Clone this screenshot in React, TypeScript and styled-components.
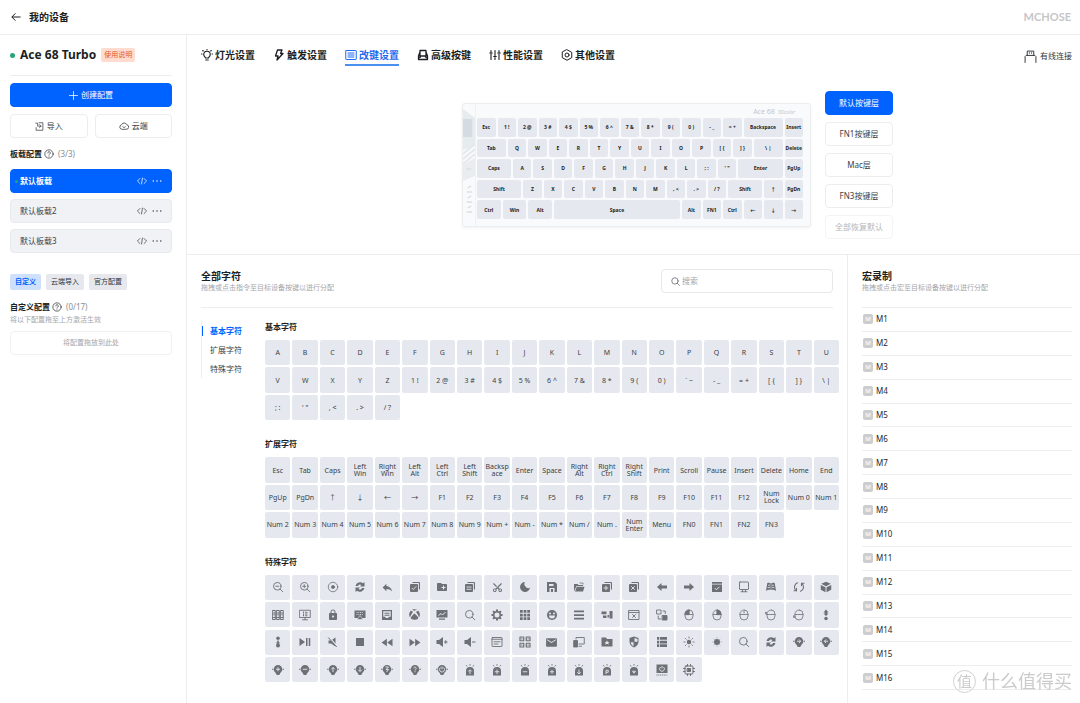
import React from "react";
import styled, { createGlobalStyle, css } from "styled-components";
import {
  MdReply,
  MdCreateNewFolder,
  MdContentCut,
  MdLock,
  MdFastRewind,
  MdFastForward,
  MdStop,
  MdMail,
} from "react-icons/md";
import { FaXbox } from "react-icons/fa";

const BLUE = "#0062ff";
const KEY = "#e5e9ef";
const LINE = "#ededee";

const GlobalStyle = createGlobalStyle`
  *, *::before, *::after { box-sizing: border-box; }
  body {
    margin: 0;
    background: #fff;
    color: #1c1e22;
    font-family: "Noto Sans", "Noto Sans CJK SC", sans-serif;
    font-size: 8px;
    line-height: 12px;
  }
  button, input { font: inherit; color: inherit; margin: 0; }
  button { cursor: pointer; }
  h1, h2, h3, p, ul { margin: 0; padding: 0; }
  ul { list-style: none; }
  a { color: inherit; text-decoration: none; }
  svg { display: block; flex: none; }
`;

/* ---------- shell ---------- */

const Page = styled.div`
  display: flex;
  flex-direction: column;
  min-height: 100vh;
`;

const TopBar = styled.header`
  display: flex;
  align-items: center;
  justify-content: space-between;
  height: 35px;
  padding: 0 9px 0 11px;
  border-bottom: 1px solid ${LINE};
`;

const BackLink = styled.a`
  display: flex;
  align-items: center;
  gap: 8px;
  font-size: 10px;
  font-weight: 700;
`;

const Brand = styled.span`
  font-family: Lato, sans-serif;
  font-size: 11px;
  font-weight: 700;
  color: #c6c6c8;
`;

const Body = styled.div`
  display: flex;
  flex: 1;
`;

const Sidebar = styled.aside`
  width: 187px;
  flex: none;
  padding: 0 14px 0 10px;
  border-right: 1px solid ${LINE};
`;

const Main = styled.main`
  display: flex;
  flex: 1;
  flex-direction: column;
  min-width: 0;
`;

/* ---------- sidebar ---------- */

const DeviceRow = styled.div`
  display: flex;
  align-items: center;
  height: 41px;
  border-bottom: 1px solid ${LINE};
`;

const Dot = styled.span<{ $size: number }>`
  display: block;
  width: ${(p) => p.$size}px;
  height: ${(p) => p.$size}px;
  border-radius: 50%;
  background: #27a376;
`;

const DeviceName = styled.h1`
  margin: 0 5px;
  font-size: 12px;
  line-height: 18px;
  font-weight: 700;
  white-space: nowrap;
`;

const GuideLink = styled.a`
  padding: 1px 3px;
  border-radius: 2px;
  background: #ffdccf;
  color: #e4582b;
  font-size: 7px;
`;

const Button = styled.button<{ $kind?: "primary" | "muted" }>`
  display: flex;
  flex: 1;
  align-items: center;
  justify-content: center;
  gap: 3px;
  width: 100%;
  height: 24px;
  padding: 0;
  border: 1px solid ${LINE};
  border-radius: 4px;
  background: #fff;
  color: #3b3e44;
  ${(p) =>
    p.$kind === "primary" &&
    css`
      background: ${BLUE};
      border-color: ${BLUE};
      color: #fff;
    `}
  ${(p) =>
    p.$kind === "muted" &&
    css`
      border-color: #f4f4f5;
      color: #b4b6ba;
    `}
`;

const Actions = styled.div`
  display: flex;
  flex-wrap: wrap;
  gap: 7px;
  margin-top: 7px;
`;

const FullRow = styled.div`
  display: flex;
  width: 100%;
`;

const GroupTitle = styled.h2<{ $tall?: boolean }>`
  display: flex;
  align-items: center;
  gap: 2px;
  height: ${(p) => (p.$tall ? 31 : 14)}px;
  font-size: 8px;
  font-weight: 700;
`;

const Count = styled.span`
  margin-left: 2px;
  font-weight: 400;
  color: #8b8e94;
`;

const ProfileList = styled.ul`
  display: flex;
  flex-direction: column;
  gap: 6px;
`;

const Profile = styled.li<{ $active?: boolean }>`
  display: flex;
  align-items: center;
  height: 24px;
  padding: 0 9px 0 4px;
  border: 1px solid ${(p) => (p.$active ? BLUE : "#e9eaee")};
  border-radius: 4px;
  background: ${(p) => (p.$active ? BLUE : "#f1f2f6")};
  color: ${(p) => (p.$active ? "#fff" : "#3b3e44")};
  font-weight: ${(p) => (p.$active ? 700 : 400)};
`;

const ProfileMark = styled.span`
  width: 5px;
`;

const ProfileName = styled.span`
  flex: 1;
`;

const IconButton = styled.button`
  display: flex;
  padding: 0;
  margin-left: 5px;
  border: 0;
  background: none;
`;

const Chips = styled.div`
  display: flex;
  gap: 5px;
  margin: 21px 0 10px;
`;

const Chip = styled.button<{ $active?: boolean }>`
  height: 16px;
  padding: 0 5px;
  border: 0;
  border-radius: 2px;
  font-size: 7px;
  line-height: 16px;
  font-weight: ${(p) => (p.$active ? 700 : 400)};
  background: ${(p) => (p.$active ? "#cfe0fd" : "#e6e8ed")};
  color: ${(p) => (p.$active ? BLUE : "#33363b")};
`;

const Hint = styled.p`
  font-size: 7px;
  line-height: 12px;
  color: #a4a6ab;
`;

const DropZone = styled.div`
  display: flex;
  align-items: center;
  justify-content: center;
  height: 24px;
  margin-top: 5px;
  border: 1px solid #f1f1f2;
  border-radius: 4px;
  color: #a4a6ab;
  font-size: 7px;
`;

/* ---------- upper area ---------- */

const Stage = styled.section`
  padding: 11px 8px 15px 14px;
  border-bottom: 1px solid ${LINE};
`;

const TabRow = styled.div`
  display: flex;
  align-items: center;
  justify-content: space-between;
`;

const Tabs = styled.nav`
  display: flex;
  gap: 18px;
`;

const Tab = styled.a<{ $active?: boolean }>`
  display: flex;
  align-items: center;
  gap: 2px;
  height: 20px;
  border-bottom: 2px solid ${(p) => (p.$active ? "#4a90f0" : "transparent")};
  color: ${(p) => (p.$active ? "#1f6bf0" : "#1c1e22")};
  font-size: 10px;
  font-weight: 700;
  white-space: nowrap;
`;

const Connection = styled.span`
  display: flex;
  align-items: center;
  gap: 3px;
  font-size: 8px;
  color: #33363b;
`;

const Workbench = styled.div`
  display: grid;
  grid-template-columns: 1fr auto 1fr;
  align-items: center;
  gap: 14px;
  margin-top: 25px;
`;

const Keyboard = styled.div`
  grid-column: 2;
  display: grid;
  grid-template-columns: 13px 328px 6px;
  grid-template-rows: 13px 103px 6px;
  border: 1px solid #eceef0;
  border-radius: 3px;
  background: #f9fafb;
  box-shadow: 0 1px 3px #0000000f;
`;

const KeyboardSide = styled.div`
  grid-row: 1 / -1;
  border-right: 1px solid #eff1f3;
`;

const KeyboardLogo = styled.div`
  grid-column: 2;
  padding: 1px 9px 0 0;
  text-align: right;
  font-size: 7px;
  line-height: 13px;
  color: #c3c7cc;
`;

const Edition = styled.em`
  margin-left: 3px;
  font-size: 5px;
`;

const KeyMatrix = styled.div`
  grid-column: 2;
  display: grid;
  grid-template-columns: repeat(64, minmax(0, 1fr));
  grid-template-rows: repeat(5, minmax(0, 1fr));
`;

const BoardKey = styled.button<{ $span: number }>`
  grid-column: span ${(p) => p.$span};
  margin: 1px;
  padding: 0;
  border: 0;
  border-radius: 2px;
  background: ${KEY};
  font-size: 5px;
  line-height: 6px;
  font-weight: 700;
  white-space: pre;
`;

const Layers = styled.div`
  display: flex;
  flex-direction: column;
  gap: 7px;
  width: 68px;
`;

/* ---------- lower area ---------- */

const Lower = styled.div`
  display: flex;
  flex: 1;
`;

const Library = styled.section`
  flex: 1;
  min-width: 0;
  padding-left: 14px;
`;

const Macros = styled.section`
  width: 233px;
  flex: none;
  padding: 0 8px 0 14px;
  border-left: 1px solid ${LINE};
`;

const PanelHead = styled.div<{ $inset?: boolean }>`
  display: flex;
  align-items: center;
  justify-content: space-between;
  margin-right: ${(p) => (p.$inset ? 14 : 0)}px;
  padding: 14px 0;
  border-bottom: 1px solid ${LINE};
`;

const PanelTitle = styled.h2`
  font-size: 10px;
  line-height: 14px;
  font-weight: 700;
`;

const PanelHint = styled.p`
  font-size: 7px;
  line-height: 10px;
  color: #a4a6ab;
`;

const Search = styled.label`
  display: flex;
  align-items: center;
  gap: 2px;
  width: 172px;
  height: 24px;
  padding: 0 9px;
  border: 1px solid #e8e8ea;
  border-radius: 4px;
  color: #5c6066;
`;

const SearchInput = styled.input`
  flex: 1;
  min-width: 0;
  padding: 0;
  border: 0;
  outline: 0;
  background: none;
  &::placeholder { color: #a4a6ab; opacity: 1; }
`;

const LibraryBody = styled.div`
  display: flex;
  padding: 13px 8px 19px 0;
`;

const Anchors = styled.nav`
  display: flex;
  flex: none;
  flex-direction: column;
  align-self: flex-start;
  width: 64px;
`;

const Anchor = styled.a<{ $active?: boolean }>`
  display: flex;
  align-items: center;
  height: 19px;
  border-left: 1px solid ${LINE};
  color: ${(p) => (p.$active ? BLUE : "#3b3e44")};
  font-weight: ${(p) => (p.$active ? 700 : 400)};
  &::before {
    content: "";
    width: 1px;
    height: 10px;
    margin-right: 7px;
    background: ${(p) => (p.$active ? BLUE : "transparent")};
  }
`;

const Groups = styled.div`
  display: flex;
  flex: 1;
  flex-direction: column;
  gap: 18px;
  min-width: 0;
`;

const KeyGroupTitle = styled.h3`
  margin-bottom: 7px;
  font-size: 8px;
  line-height: 12px;
  font-weight: 700;
`;

const KeyGrid = styled.div`
  display: grid;
  grid-template-columns: repeat(21, minmax(0, 1fr));
  gap: 2px;
`;

const KeyCap = styled.button`
  display: flex;
  align-items: center;
  justify-content: center;
  aspect-ratio: 1;
  min-width: 0;
  padding: 0;
  border: 0;
  border-radius: 2px;
  background: ${KEY};
  color: #3b3e44;
  font-size: 7px;
  line-height: 7px;
`;

const KeyText = styled.span`
  width: 100%;
  text-align: center;
  white-space: pre-line;
  overflow-wrap: anywhere;
`;

const Glyph = styled.span`
  color: #6d7074;
`;

const MacroList = styled.ul`
  display: grid;
  grid-template-rows: repeat(16, minmax(0, 1fr));
  height: 382px;
`;

const Macro = styled.li`
  display: flex;
  align-items: center;
  gap: 3px;
  padding-left: 1px;
  border-bottom: 1px solid ${LINE};
  color: #26282c;
`;

const MacroBadge = styled.span`
  width: 10px;
  height: 10px;
  border-radius: 2px;
  background: #cdcdcf;
  color: #f4f4f5;
  font-size: 6px;
  line-height: 10px;
  font-weight: 700;
  text-align: center;
`;

const Watermark = styled.div`
  position: fixed;
  right: 8px;
  bottom: 10px;
  display: flex;
  align-items: center;
  gap: 6px;
  color: #cbcbcd;
  font-size: 18px;
  line-height: 24px;
  pointer-events: none;
`;

const WatermarkSeal = styled.span`
  width: 23px;
  height: 23px;
  border: 1px solid #d0d0d2;
  border-radius: 50%;
  font-size: 15px;
  line-height: 20px;
  text-align: center;
`;

/* ---------- icons ---------- */

type DrawProps = { size?: number; children: React.ReactNode };

const Outline = ({ size = 12, w = 2, children }: DrawProps & { w?: number }) => (
  <svg width={size} height={size} viewBox="0 0 24 24" fill="none" stroke="currentColor" strokeWidth={w} strokeLinecap="round" strokeLinejoin="round" aria-hidden>
    {children}
  </svg>
);

const Solid = ({ size = 12, children }: DrawProps) => (
  <svg width={size} height={size} viewBox="0 0 24 24" fill="currentColor" aria-hidden>
    {children}
  </svg>
);

const HelpIcon = () => (
  <Outline size={10} w={1.6}>
    <circle cx="12" cy="12" r="10" />
    <path d="M9 9.500a3 3 0 1 1 4.400 2.600c-.9.5-1.400 1-1.400 2M12 17.200v.3" />
  </Outline>
);

const CodeIcon = () => (
  <Outline size={10} w={1.8}>
    <path d="M7 6 1 12l6 6M17 6l6 6-6 6M13 5l-2 14" />
  </Outline>
);

const MoreIcon = () => (
  <Solid size={10}>
    <circle cx="3" cy="12" r="1.800" />
    <circle cx="12" cy="12" r="1.800" />
    <circle cx="21" cy="12" r="1.800" />
  </Solid>
);

const Lens = ({ mark }: { mark?: string }) => (
  <Outline w={1.8}>
    <circle cx="10.500" cy="10.500" r="7.500" />
    <path d="m16 16 5.500 5.500" />
    {mark && <path d={mark} />}
  </Outline>
);

/* Two stacked sheets with a mark cut out of the front one. */
const Stack = ({ mark }: { mark: string }) => (
  <Solid>
    <path d="M7 2h13a2 2 0 0 1 2 2v13h-2.200V4.200H7z" />
    <rect x="2" y="6" width="16" height="16" rx="2" />
    <path d={mark} fill="none" stroke={KEY} strokeWidth="1.800" />
  </Solid>
);

/* Two chunky arrows chasing each other. */
const Swirl = () => (
  <Solid>
    <path d="M3 10a9.500 9.500 0 0 1 15-5.500L21 2v9h-9l3-3C12 6 9 7 8 10z" />
    <path d="M3 10a9.500 9.500 0 0 1 15-5.500L21 2v9h-9l3-3C12 6 9 7 8 10z" transform="rotate(180 12 12)" />
  </Solid>
);

const MouseBody = ({ children }: { children: React.ReactNode }) => (
  <Outline w={1.6}>
    <rect x="4" y="2" width="16" height="20" rx="8" />
    {children}
  </Outline>
);

/* Light bulb with side rays and a mark inside. */
const Bulb = ({ mark }: { mark: string }) => (
  <Solid>
    <path d="M12 2a8.500 8.500 0 0 1 8.500 8.500c0 3-1.600 5.500-3.500 7L14.500 22h-5L7 17.500c-1.900-1.500-3.500-4-3.500-7A8.500 8.500 0 0 1 12 2z" />
    <path d="M0 10.500h3M21 10.500h3" stroke="currentColor" strokeWidth="2" />
    <path d={mark} fill="none" stroke={KEY} strokeWidth="1.800" />
  </Solid>
);

/* Backlight dome with rays above and a mark inside. */
const Dome = ({ mark }: { mark: string }) => (
  <Solid>
    <path d="M4 23v-9a8 8 0 0 1 16 0v9z" />
    <path d="M12 0v3.500M4 2l2.500 3M20 2l-2.500 3" stroke="currentColor" strokeWidth="1.600" />
    <path d={mark} fill="none" stroke={KEY} strokeWidth="1.800" />
  </Solid>
);

const OCTANTS = [0, 45, 90, 135, 180, 225, 270, 315];

const Rays = ({ from, to, w }: { from: number; to: number; w: number }) => (
  <g stroke="currentColor" strokeWidth={w}>
    {OCTANTS.map((a) => (
      <path key={a} d={`M12 ${12 - from}V${12 - to}`} transform={`rotate(${a} 12 12)`} />
    ))}
  </g>
);

const ArrowSolid = ({ flip }: { flip?: boolean }) => (
  <Solid>
    <path d="M11 4v5h11v6H11v5l-9-8z" transform={flip ? "rotate(180 12 12)" : undefined} />
  </Solid>
);

const SPECIAL: React.ReactNode[] = [
  <Lens mark="M7.500 10.500h6" />,
  <Lens mark="M7.500 10.500h6M10.500 7.500v6" />,
  <Outline w={1.6}><circle cx="12" cy="12" r="9.500" /><circle cx="12" cy="12" r="3" fill="currentColor" /></Outline>,
  <Swirl />,
  <MdReply size={13} />,
  <Stack mark="m5.500 14 3 3 6-6.500" />,
  <MdCreateNewFolder size={12} />,
  <Stack mark="M5 12h10M5 16.500h10" />,
  <MdContentCut size={11} style={{ transform: "rotate(-90deg)" }} />,
  <Solid><path d="M12 2a10 10 0 1 0 10 11 6 6 0 0 1-9-2 7 7 0 0 1-1-9z" /></Solid>,
  <Solid><path fillRule="evenodd" d="M2 2h16l4 4v16h-5v-8H7v8H2zM6 6v4h9V6zM10 16h4v6h-4z" /></Solid>,
  <Solid><path d="M2 21V6h7l2 2h9v2H7z" /><path d="M7.500 11.500H23L20 21H4z" /><path d="M13 4h7v3" fill="none" stroke="currentColor" strokeWidth="1.500" /></Solid>,
  <Stack mark="M10 9.500v9M5.500 14h9" />,
  <Stack mark="m6.500 10.500 7 7M13.500 10.500l-7 7" />,
  <ArrowSolid />,
  <ArrowSolid flip />,
  <Solid><path d="M2 2h20v3.500H2zM2 7h20v15H2z" /><path d="m7.500 14 3.500 3.500 6-6" fill="none" stroke={KEY} strokeWidth="2" /></Solid>,
  <Outline w={1.8}><rect x="3" y="2" width="18" height="15" rx="1" /><path d="M9 17v4M15 17v4M6 21.500h12" /></Outline>,
  <Solid><path d="M2 20 4.500 4c3-1 5-1 7 .5V18c-3-1-6-1-9.500 2zM22 20 19.500 4c-3-1-5-1-7 .5V18c3-1 6-1 9.500 2z" /><path d="M6 8.500h4M14 8.500h4M5.500 13H10M14 13h4.500" stroke={KEY} strokeWidth="1.500" /></Solid>,
  <Outline w={2.2}><path d="M9 3.500a9 9 0 0 0-2.500 15.700M15 20.500a9 9 0 0 0 2.500-15.700" /><path d="M7 14.500v5H2M17 9.500v-5h5" /></Outline>,
  <Solid><path d="m12 1.500 9.500 4-9.500 5-9.500-5zM1.500 8 11 12.700V22.500l-9.500-5zM22.500 8 13 12.700V22.500l9.500-5z" /></Solid>,

  <Outline w={2}><rect x="1.500" y="3" width="5" height="18" /><rect x="9.500" y="3" width="5" height="18" /><rect x="17.500" y="3" width="5" height="18" /><path d="M4 7v5M12 7v5M20 7v5M2 17h4M10 17h4M18 17h4" /></Outline>,
  <Outline w={1.8}><rect x="1.500" y="2.500" width="21" height="14.500" /><path d="M7 21.500h10M12 17v4" /><path d="M9 6v2M9 11v2.500M13 6.500h3M13 10h3M13 13.500h3" strokeWidth="2.200" /></Outline>,
  <MdLock size={12} />,
  <Solid><path d="M1 3h22v15H1z" /><path d="M5 7h14M5 11h14" stroke={KEY} strokeWidth="1.600" strokeDasharray="2 1.500" /><path d="m12 13 6 8H6z" stroke={KEY} strokeWidth="1.200" /></Solid>,
  <Solid><path fillRule="evenodd" d="M2 2h20v20H2zM4.500 4.500v11H8l2 2.500h4l2-2.500h3.500v-11zM7 7.500h10v2H7zM7 11.500h10v2H7z" /></Solid>,
  <FaXbox size={11} />,
  <Solid><path d="M1 2h22v15H1zM6 19h12v2.500H6z" /><path d="m5 13 5-4 3 3 6-6" fill="none" stroke={KEY} strokeWidth="2" /></Solid>,
  <Lens />,
  <Solid><circle cx="12" cy="12" r="6.500" fill="none" stroke="currentColor" strokeWidth="3" /><Rays from={7} to={11} w={4} /></Solid>,
  <Solid><path d="M2 2h5.500v5.500H2zM9.300 2h5.500v5.500H9.300zM16.500 2H22v5.500h-5.500zM2 9.300h5.500v5.500H2zM9.300 9.300h5.500v5.500H9.300zM16.500 9.300H22v5.500h-5.500zM2 16.500h5.500V22H2zM9.300 16.500h5.500V22H9.300zM16.500 16.500H22V22h-5.500z" /></Solid>,
  <Solid><circle cx="12" cy="12" r="10" /><g fill={KEY}><circle cx="8" cy="9" r="2" /><circle cx="16" cy="9" r="2" /><path d="M6 13h12a6 6 0 0 1-12 0z" /></g></Solid>,
  <Solid><path d="M2 3h20v3.500H2zM2 10.300h20v3.500H2zM2 17.500h20V21H2z" /></Solid>,
  <Solid><path d="M1 5h10v5.500H1zM4 13h7v5H4zM13 12h3v5h-3zM17 4h6v15h-6z" /></Solid>,
  <Outline w={1.8}><path d="M2 3h20v18H2zM2 7h20M9 11l6 6M15 11l-6 6" /></Outline>,
  <Outline w={1.8}><rect x="2" y="2" width="8" height="8" /><rect x="13" y="13" width="9" height="9" fill="currentColor" /><path d="M14 4h4.500v5M9.500 20H4.500v-6" /></Outline>,
  <MouseBody><path d="M4 11h16M12 2v9" /><path d="M4 10.500A8 8 0 0 1 12 2v8.500z" fill="currentColor" /></MouseBody>,
  <MouseBody><path d="M4 11h16M12 2v9" /><path d="M20 10.500A8 8 0 0 0 12 2v8.500z" fill="currentColor" /></MouseBody>,
  <MouseBody><path d="M4 11h16M12 5v3" /></MouseBody>,
  <MouseBody><path d="M4 11h16" /><path d="M2 7v2.500" strokeWidth="3" /></MouseBody>,
  <MouseBody><path d="M4 11h16" /><path d="M2 14v2.500" strokeWidth="3" /></MouseBody>,
  <Solid><path d="m12 1 5 6h-3v2h3l-5 5-5-5h3V7H7z" /><circle cx="12" cy="19" r="3.500" /></Solid>,

  <Solid><circle cx="12" cy="4.500" r="3.500" /><path d="M10.500 9h3v4h3.500l-5 4-5-4h3.500z" /><circle cx="12" cy="19" r="4" /></Solid>,
  <Solid><path d="m1 4 11 8-11 8zM14 4h3v16h-3zM19.500 4h3v16h-3z" /></Solid>,
  <Solid><path d="M3 9h5l9-6v18l-9-6H3z" /><path d="m4 2 17 20" stroke={KEY} strokeWidth="3" /><path d="m2.500 3 17 19" stroke="currentColor" strokeWidth="2" /></Solid>,
  <MdStop size={16} />,
  <MdFastRewind size={15} />,
  <MdFastForward size={15} />,
  <Solid><path d="M1 8h5l8-6v20l-8-6H1z" /><path d="M19.500 8.500v7M16 12h7" stroke="currentColor" strokeWidth="2" /></Solid>,
  <Solid><path d="M1 8h5l8-6v20l-8-6H1z" /><path d="M16 12h7" stroke="currentColor" strokeWidth="2" /></Solid>,
  <Outline w={1.8}><rect x="2" y="3" width="20" height="18" rx="1" /><path d="M2 6.500h20M6 11.500h12M6 16h8" /></Outline>,
  <Outline w={2.4}><rect x="2" y="2" width="7.500" height="7.500" /><rect x="14.500" y="2" width="7.500" height="7.500" /><rect x="2" y="14.500" width="7.500" height="7.500" /><rect x="14.500" y="14.500" width="7.500" height="7.500" /><path d="M5.500 5.700h.5M18 5.700h.5M5.500 18.200h.5M18 18.200h.5" /></Outline>,
  <MdMail size={13} />,
  <Outline w={1.8}><path d="M6 6V3h16.500v13H12M12 20.500h5" /><rect x="2" y="9" width="7" height="13" fill="currentColor" /></Outline>,
  <Solid><path d="M1 3h9l2 3h11v15H1z" /><path d="m12 8.500 1.500 3.500H17l-2.500 2 1 3.500-3.500-2-3.500 2 1-3.500-2.500-2h3.500z" fill={KEY} /></Solid>,
  <Solid><path d="M12 1 3 4v7c0 6 4 10 9 12 5-2 9-6 9-12V4z" /><path d="M13 4v7.500h6c.2-1 .2-4 0-5.500zM11 12.500H5.300c.8 4 3 6.500 5.700 8z" fill={KEY} /></Solid>,
  <Solid><path d="M2 2h20v5.500H2zM2 9.300h20v5.500H2zM2 16.500h20V22H2z" /><path d="M7 2v20" stroke={KEY} strokeWidth="1.500" /></Solid>,
  <Solid><circle cx="12" cy="12" r="4.500" /><Rays from={7} to={11} w={1.6} /></Solid>,
  <Solid><circle cx="12" cy="12" r="6" /><Rays from={7.5} to={9} w={1.6} /></Solid>,
  <Lens />,
  <Swirl />,
  <Bulb mark="M8 10.500h7M12 7l3.500 3.500L12 14" />,
  <Bulb mark="M16 10.500H9M12 7l-3.500 3.500L12 14" />,

  <Bulb mark="M8 10.500h8M12 6.500v8" />,
  <Bulb mark="M7.500 10.500h9" />,
  <Bulb mark="M12 16V7M8.500 10.500 12 7l3.500 3.500" />,
  <Bulb mark="M12 6v9M8.500 11.500 12 15l3.500-3.500" />,
  <Bulb mark="M9 6h6l-5 5h5l-4 5" />,
  <Bulb mark="M9 8.500C10 5.500 15 6 14.500 9c-.5 1.500-2.500 1.500-2.500 4M12 14.500v2" />,
  <Bulb mark="M9 7a5 5 0 1 0 6 0M12 5v5.500" />,
  <Dome mark="M12 20v-8M8.500 15 12 11.500l3.500 3.500" />,
  <Dome mark="M7.500 15.500h9M12 11v9" />,
  <Dome mark="M7.500 15.500h9" />,
  <Dome mark="M8 15.500h8M12 11.500V19.500" />,
  <Dome mark="M12 11v9M8.500 16.500 12 20l3.500-3.500" />,
  <Dome mark="M10 20v-7.500h4.500v4H10" />,
  <Dome mark="M9 14.500h6l-3 4z" />,
  <Solid><path d="M1 1h22v17H1z" /><path d="M9 6a4.800 4.800 0 1 0 6 0M12 4v5" fill="none" stroke={KEY} strokeWidth="1.800" /><path d="M1 22h22" stroke="currentColor" strokeWidth="2" strokeDasharray="2 1.600" /></Solid>,
  <Outline w={2}><rect x="4" y="4" width="16" height="16" rx="2" /><rect x="9" y="9" width="6" height="6" fill="currentColor" /><path d="M9 1v3M15 1v3M9 20v3M15 20v3M1 9h3M1 15h3M20 9h3M20 15h3" /></Outline>,
];

/* ---------- data ---------- */

const TABS: { label: string; icon: React.ReactNode }[] = [
  {
    label: "灯光设置",
    icon: <Outline w={2.2}><path d="M9 18c0-2-3.500-3-3.500-7a6.500 6.500 0 0 1 13 0c0 4-3.500 5-3.500 7zM9.500 22h5M12 1v.5M1 10h1M22 10h1M3.500 3l1 1M20.500 3l-1 1" /></Outline>,
  },
  {
    label: "触发设置",
    icon: <Outline w={2.6}><path d="M9 2h9l-3 7h5L8 22l2-8H5z" /></Outline>,
  },
  {
    label: "改键设置",
    icon: <Outline><rect x="1.500" y="3" width="21" height="18" rx="1" /><path d="M6 8h12M6 12h12M6 16h12" /></Outline>,
  },
  {
    label: "高级按键",
    icon: <Outline w={2.6}><path d="M6 3h12v11H6zM6 6 3 14v7h18v-7l-3-8M3 17h3l2-3M21 17h-3l-2-3" /></Outline>,
  },
  {
    label: "性能设置",
    icon: <Outline w={2.2}><path d="M4 3v3M4 10v11M1.500 8h5M12 3v10M12 17v4M9.500 15h5M20 3v3M20 10v11M17.500 8h5" /></Outline>,
  },
  {
    label: "其他设置",
    icon: <Outline><path d="m12 1.500 9.500 5.200v10.600L12 22.500l-9.500-5.200V6.700z" /><circle cx="12" cy="12" r="4" /></Outline>,
  },
];

const unit = (labels: string[]): [string, number][] => labels.map((l) => [l, 4]);

/* Label and width in quarter units, row after row. */
const BOARD: [string, number][] = [
  ...unit(["Esc", "1 !", "2 @", "3 #", "4 $", "5 %", "6 ^", "7 &", "8 *", "9 (", "0 )", "- _", "= +"]),
  ["Backspace", 8], ["Insert", 4],
  ["Tab", 6],
  ...unit(["Q", "W", "E", "R", "T", "Y", "U", "I", "O", "P", "[ {", "] }"]),
  ["\\ |", 6], ["Delete", 4],
  ["Caps", 7],
  ...unit(["A", "S", "D", "F", "G", "H", "J", "K", "L", "; :", "' \""]),
  ["Enter", 9], ["PgUp", 4],
  ["Shift", 9],
  ...unit(["Z", "X", "C", "V", "B", "N", "M", ", <", ". >", "/ ?"]),
  ["Shift", 7], ["↑", 4], ["PgDn", 4],
  ["Ctrl", 5], ["Win", 5], ["Alt", 5], ["Space", 25],
  ...unit(["Alt", "FN1", "Ctrl", "←", "↓", "→"]),
];

const BASIC = [
  ..."ABCDEFGHIJKLMNOPQRSTUVWXYZ".split(""),
  "1 !", "2 @", "3 #", "4 $", "5 %", "6 ^", "7 &", "8 *", "9 (", "0 )",
  "` ~", "- _", "= +", "[ {", "] }", "\\ |", "; :", "' \"", ", <", ". >", "/ ?",
];

const EXTENDED = [
  "Esc", "Tab", "Caps", "Left\nWin", "Right\nWin", "Left\nAlt", "Left\nCtrl", "Left\nShift", "Backspace",
  "Enter", "Space", "Right\nAlt", "Right\nCtrl", "Right\nShift", "Print", "Scroll", "Pause", "Insert",
  "Delete", "Home", "End",
  "PgUp", "PgDn", "↑", "↓", "←", "→",
  "F1", "F2", "F3", "F4", "F5", "F6", "F7", "F8", "F9", "F10", "F11", "F12",
  "Num\nLock", "Num 0", "Num 1", "Num 2", "Num 3", "Num 4", "Num 5", "Num 6", "Num 7", "Num 8", "Num 9",
  "Num +", "Num -", "Num *", "Num /", "Num .", "Num\nEnter", "Menu", "FN0", "FN1", "FN2", "FN3",
];

const PROFILES = ["默认板载", "默认板载2", "默认板载3"];
const LAYERS = ["默认按键层", "FN1按键层", "Mac层", "FN3按键层"];
const SECTIONS = ["基本字符", "扩展字符", "特殊字符"];
const MACROS = Array.from({ length: 16 }, (_, i) => `M${i + 1}`);

/* ---------- parts ---------- */

const TextKeys = ({ title, keys }: { title: string; keys: string[] }) => (
  <section id={title}>
    <KeyGroupTitle>{title}</KeyGroupTitle>
    <KeyGrid>
      {keys.map((k) => (
        <KeyCap key={k}>
          <KeyText>{k}</KeyText>
        </KeyCap>
      ))}
    </KeyGrid>
  </section>
);

const CaseArt = () => (
  <svg width="12" height="121" viewBox="0 0 13 121" preserveAspectRatio="none" aria-hidden>
    <path d="M0 5 13 14v28L0 46z" fill="#e6ebee" />
    <path d="M0 15h10v18H0z" fill="#d4dce2" />
    <path d="M0 50 13 40M0 55 13 45M0 60 13 50" stroke="#e3e8eb" strokeWidth="2" />
    <path d="M0 61 13 54v18L0 77z" fill="#e9edf0" />
    <path d="M4 65h5" stroke="#cfd5da" />
    <path d="M5 84l4-2M4 88h6M5 94l4-2M4 98h6M5 104l4-2M4 108h6" stroke="#cdd2d6" />
  </svg>
);

const DeviceSidebar = () => (
  <Sidebar>
    <DeviceRow>
      <Dot $size={5} />
      <DeviceName>Ace 68 Turbo</DeviceName>
      <GuideLink href="#guide">使用说明</GuideLink>
    </DeviceRow>
    <Actions>
      <FullRow>
        <Button $kind="primary">
          <Outline size={9}><path d="M12 1v22M1 12h22" /></Outline>
          创建配置
        </Button>
      </FullRow>
      <Button>
        <Outline size={9}><path d="M11 2h10v20H3v-7M2 3h5v8h9M12 7l4 4-4 4" /></Outline>
        导入
      </Button>
      <Button>
        <Outline size={10}><path d="M7 20a5.500 5.500 0 0 1-1-10.800 7 7 0 0 1 13 0A5.500 5.500 0 0 1 17 20zM9 14c2 2 4 2 6 0" /></Outline>
        云端
      </Button>
    </Actions>
    <GroupTitle $tall>
      板载配置 <HelpIcon /> <Count>(3/3)</Count>
    </GroupTitle>
    <ProfileList>
      {PROFILES.map((name, i) => (
        <Profile key={name} $active={i === 0}>
          <ProfileMark>{i === 0 && <Dot $size={3} />}</ProfileMark>
          <ProfileName>{name}</ProfileName>
          <IconButton aria-label="代码"><CodeIcon /></IconButton>
          <IconButton aria-label="更多"><MoreIcon /></IconButton>
        </Profile>
      ))}
    </ProfileList>
    <Chips>
      <Chip $active>自定义</Chip>
      <Chip>云端导入</Chip>
      <Chip>官方配置</Chip>
    </Chips>
    <GroupTitle>
      自定义配置 <HelpIcon /> <Count>(0/17)</Count>
    </GroupTitle>
    <Hint>将以下配置拖至上方激活生效</Hint>
    <DropZone>将配置拖放到此处</DropZone>
  </Sidebar>
);

const BoardStage = () => (
  <Stage>
    <TabRow>
      <Tabs>
        {TABS.map((t, i) => (
          <Tab key={t.label} href="#tab" $active={i === 2}>
            {t.icon}
            {t.label}
          </Tab>
        ))}
      </Tabs>
      <Connection>
        <Outline size={13} w={1.8}>
          <path d="M6 10V2h12v8M2 23V12l2-2h16l2 2v11M10 5v1M14 5v1" />
        </Outline>
        有线连接
      </Connection>
    </TabRow>
    <Workbench>
      <Keyboard>
        <KeyboardSide><CaseArt /></KeyboardSide>
        <KeyboardLogo>Ace 68<Edition>3Dcolor</Edition></KeyboardLogo>
        <KeyMatrix>
          {BOARD.map(([label, span], i) => (
            <BoardKey key={i} $span={span}>{label}</BoardKey>
          ))}
        </KeyMatrix>
      </Keyboard>
      <Layers>
        {LAYERS.map((l, i) => (
          <FullRow key={l}>
            <Button $kind={i === 0 ? "primary" : undefined}>{l}</Button>
          </FullRow>
        ))}
        <FullRow>
          <Button $kind="muted" disabled>全部恢复默认</Button>
        </FullRow>
      </Layers>
    </Workbench>
  </Stage>
);

const KeyLibrary = () => (
  <Library>
    <PanelHead $inset>
      <div>
        <PanelTitle>全部字符</PanelTitle>
        <PanelHint>拖拽或点击指令至目标设备按键以进行分配</PanelHint>
      </div>
      <Search>
        <Outline size={9}><circle cx="10.500" cy="10.500" r="8.500" /><path d="m17 17 5.500 5.500" /></Outline>
        <SearchInput type="text" placeholder="搜索" aria-label="搜索" />
      </Search>
    </PanelHead>
    <LibraryBody>
      <Anchors>
        {SECTIONS.map((s, i) => (
          <Anchor key={s} href={`#${s}`} $active={i === 0}>{s}</Anchor>
        ))}
      </Anchors>
      <Groups>
        <TextKeys title="基本字符" keys={BASIC} />
        <TextKeys title="扩展字符" keys={EXTENDED} />
        <section id="特殊字符">
          <KeyGroupTitle>特殊字符</KeyGroupTitle>
          <KeyGrid>
            {SPECIAL.map((icon, i) => (
              <KeyCap key={i}>
                <Glyph>{icon}</Glyph>
              </KeyCap>
            ))}
          </KeyGrid>
        </section>
      </Groups>
    </LibraryBody>
  </Library>
);

const MacroPanel = () => (
  <Macros>
    <PanelHead>
      <div>
        <PanelTitle>宏录制</PanelTitle>
        <PanelHint>拖拽或点击宏至目标设备按键以进行分配</PanelHint>
      </div>
    </PanelHead>
    <MacroList>
      {MACROS.map((m) => (
        <Macro key={m}>
          <MacroBadge>M</MacroBadge>
          {m}
        </Macro>
      ))}
    </MacroList>
  </Macros>
);

export default function App() {
  return (
    <Page>
      <GlobalStyle />
      <TopBar>
        <BackLink href="#devices">
          <Outline size={10} w={2.4}><path d="M22 12H3M10 4l-8 8 8 8" /></Outline>
          我的设备
        </BackLink>
        <Brand>MCHOSE</Brand>
      </TopBar>
      <Body>
        <DeviceSidebar />
        <Main>
          <BoardStage />
          <Lower>
            <KeyLibrary />
            <MacroPanel />
          </Lower>
        </Main>
      </Body>
      <Watermark>
        <WatermarkSeal>值</WatermarkSeal>
        什么值得买
      </Watermark>
    </Page>
  );
}
